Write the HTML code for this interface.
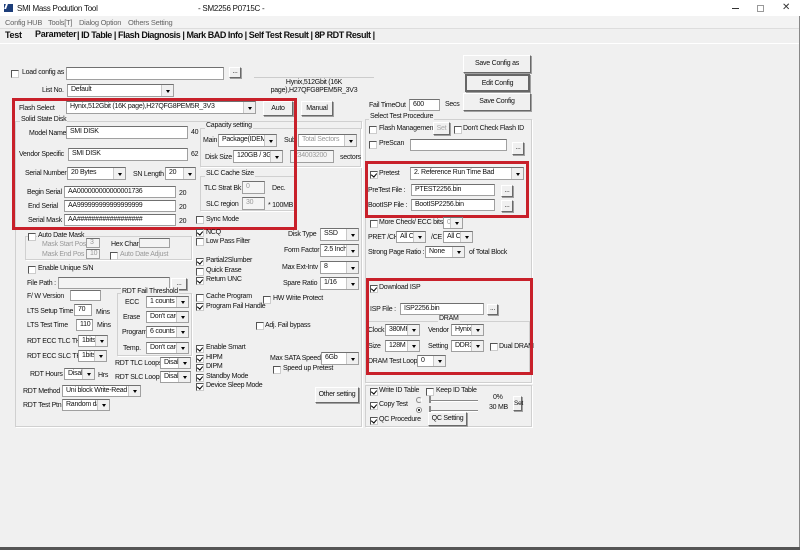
<!DOCTYPE html>
<html><head><meta charset="utf-8"><style>
*{margin:0;padding:0;box-sizing:border-box}
body{width:800px;height:550px;background:#f0f0f0;font-family:"Liberation Sans",sans-serif;font-size:7px;letter-spacing:-0.25px;color:#111;position:relative;overflow:hidden}
.a{position:absolute;white-space:nowrap}
.i{position:absolute;background:#fff;border:1px solid #a0a0a0;border-top-color:#707070;font-size:7px;padding:1px 0 0 3px;overflow:hidden;white-space:nowrap}
.x{background:#f4f4f4;color:#999}
.d{position:absolute;background:#fff;border:1px solid #a0a0a0;border-top-color:#707070;font-size:7px;padding:1px 0 0 3px;overflow:hidden;white-space:nowrap}
.d:after{content:"";position:absolute;right:0;top:0;bottom:0;width:11px;background:#f0f0f0;border-left:1px solid #c8c8c8}
.d:before{content:"";position:absolute;right:3px;top:50%;margin-top:-1px;border:2.5px solid transparent;border-top:3px solid #000;z-index:2}
.c{position:absolute;width:8px;height:8px;background:#fff;border:1px solid #555;border-right-color:#ccc;border-bottom-color:#ccc}
.k:after{content:"";position:absolute;left:1px;top:0px;width:3px;height:4px;border:solid #000;border-width:0 1.5px 1.5px 0;transform:rotate(40deg)}
.b{position:absolute;background:#f0f0f0;border:1px solid #fff;border-right-color:#696969;border-bottom-color:#696969;box-shadow:1px 1px 0 #a0a0a0;text-align:center;font-size:7px;white-space:nowrap}
.g{position:absolute;border:1px solid #d0d0d0;box-shadow:1px 1px 0 #fff}
.gl{position:absolute;background:#f0f0f0;padding:0 1px;white-space:nowrap}
.r{position:absolute;border:3px solid #c8202a}
.gr{color:#999}
</style></head><body>
<!-- title bar -->
<div class="a" style="left:0;top:0;width:800px;height:16px;background:#fff"></div>
<div class="a" style="left:4px;top:4px;width:9px;height:8px;background:#1d3e7a"></div>
<div class="a" style="left:5px;top:4px;width:6px;height:5px;border-left:2px solid #fff;transform:skewX(-20deg)"></div>
<div class="a" style="left:17px;top:4px;font-size:8px">SMI Mass Podution Tool</div>
<div class="a" style="left:198px;top:4px;font-size:8px">- SM2256 P0715C -</div>
<div class="a" style="left:732px;top:8px;width:7px;height:1px;background:#333"></div>
<div class="a" style="left:757px;top:5px;width:7px;height:7px;border:1px solid #999"></div>
<div class="a" style="left:782px;top:2px;font-size:10px;color:#333">✕</div>
<!-- menu -->
<div class="a" style="left:0;top:16px;width:800px;height:12px;background:#f3f3f3"></div>
<div class="a" style="left:5px;top:18px;color:#666;font-size:7.5px">Config HUB</div>
<div class="a" style="left:48px;top:18px;color:#666;font-size:7.5px">Tools[T]</div>
<div class="a" style="left:79px;top:18px;color:#666;font-size:7.5px">Dialog Option</div>
<div class="a" style="left:128px;top:18px;color:#666;font-size:7.5px">Others Setting</div>
<div class="a" style="left:0;top:28px;width:800px;height:1px;background:#ddd"></div>
<!-- tabs -->
<div class="a" style="left:5px;top:30px;font-size:9px;font-weight:bold;letter-spacing:-0.3px">Test</div>
<div class="a" style="left:35px;top:29px;font-size:9px;font-weight:bold;letter-spacing:-0.3px">Parameter</div>
<div class="a" style="left:77px;top:30px;font-size:9px;font-weight:bold;letter-spacing:-0.45px">| ID Table | Flash Diagnosis | Mark BAD Info | Self Test Result | 8P RDT Result |</div>
<div class="a" style="left:0;top:43px;width:800px;height:1px;background:#fff"></div>
<div class="a" style="left:799px;top:16px;width:1px;height:534px;background:#888"></div>
<div class="a" style="left:0;top:547px;width:800px;height:3px;background:#555"></div>

<!-- load config -->
<div class="c" style="left:11px;top:70px"></div>
<div class="a" style="left:22px;top:69px">Load config as</div>
<div class="i" style="left:66px;top:67px;width:158px;height:13px"></div>
<div class="b" style="left:229px;top:67px;width:12px;height:11px;line-height:8px">...</div>
<div class="a" style="left:42px;top:87px">List No.</div>
<div class="d" style="left:67px;top:84px;width:107px;height:13px">Default</div>
<div class="a" style="left:254px;top:77px;width:120px;height:22px;border-top:1px solid #ccc;text-align:center;font-size:7px;line-height:8px;padding-top:1px">Hynix,512Gbit (16K<br>page),H27QFG8PEM5R_3V3</div>
<div class="b" style="left:463px;top:55px;width:68px;height:18px;line-height:16px">Save Config as</div>
<div class="b" style="left:465px;top:74px;width:65px;height:18px;line-height:15px;border:2px solid #666">Edit Config</div>
<div class="b" style="left:463px;top:93px;width:68px;height:18px;line-height:16px">Save Config</div>

<!-- left big group -->
<div class="g" style="left:15px;top:121px;width:347px;height:306px"></div>
<div class="gl" style="left:20px;top:116px">Solid State Disk</div>
<div class="a" style="left:19px;top:105px">Flash Select</div>
<div class="d" style="left:66px;top:101px;width:190px;height:13px">Hynix,512Gbit (16K page),H27QFG8PEM5R_3V3</div>
<div class="b" style="left:263px;top:101px;width:30px;height:15px;line-height:13px">Auto</div>
<div class="b" style="left:301px;top:101px;width:32px;height:15px;line-height:13px">Manual</div>
<div class="a" style="left:29px;top:130px">Model Name</div>
<div class="i" style="left:66px;top:126px;width:122px;height:13px">SMI DISK</div>
<div class="a" style="left:191px;top:129px">40</div>
<div class="a" style="left:19px;top:151px">Vendor Specific</div>
<div class="i" style="left:68px;top:148px;width:120px;height:13px">SMI DISK</div>
<div class="a" style="left:191px;top:151px">62</div>
<div class="a" style="left:25px;top:170px">Serial Number</div>
<div class="d" style="left:67px;top:167px;width:59px;height:13px">20 Bytes</div>
<div class="a" style="left:133px;top:171px">SN Length</div>
<div class="d" style="left:165px;top:167px;width:31px;height:13px">20</div>
<div class="a" style="left:27px;top:189px">Begin Serial</div>
<div class="i" style="left:64px;top:186px;width:112px;height:12px">AA000000000000001736</div>
<div class="a" style="left:179px;top:190px">20</div>
<div class="a" style="left:28px;top:203px">End Serial</div>
<div class="i" style="left:64px;top:200px;width:112px;height:12px">AA999999999999999999</div>
<div class="a" style="left:179px;top:204px">20</div>
<div class="a" style="left:28px;top:217px">Serial Mask</div>
<div class="i" style="left:64px;top:214px;width:112px;height:12px">AA##################</div>
<div class="a" style="left:179px;top:218px">20</div>

<div class="g" style="left:200px;top:128px;width:161px;height:39px"></div>
<div class="gl" style="left:205px;top:122px">Capacity setting</div>
<div class="a" style="left:203px;top:137px">Main</div>
<div class="d" style="left:218px;top:134px;width:59px;height:13px">Package(IDEMA)</div>
<div class="a" style="left:284px;top:137px">Sub</div>
<div class="d x" style="left:298px;top:134px;width:59px;height:13px">Total Sectors</div>
<div class="a" style="left:205px;top:154px">Disk Size</div>
<div class="d" style="left:233px;top:150px;width:50px;height:13px">120GB / 3GB</div>
<div class="i x" style="left:290px;top:150px;width:44px;height:13px">234003200</div>
<div class="a" style="left:340px;top:154px">sectors</div>

<div class="g" style="left:200px;top:176px;width:95px;height:35px"></div>
<div class="gl" style="left:205px;top:170px">SLC Cache Size</div>
<div class="a" style="left:204px;top:185px">TLC Strat Bk</div>
<div class="i x" style="left:242px;top:181px;width:23px;height:13px">0</div>
<div class="a" style="left:272px;top:185px">Dec.</div>
<div class="a" style="left:206px;top:201px">SLC region</div>
<div class="i x" style="left:242px;top:197px;width:23px;height:13px">30</div>
<div class="a" style="left:268px;top:202px">* 100MB</div>
<div class="c" style="left:196px;top:216px"></div><div class="a" style="left:206px;top:216px">Sync Mode</div>
<div class="r" style="left:12px;top:98px;width:285px;height:132px"></div>

<div class="c k" style="left:196px;top:229px"></div><div class="a" style="left:206px;top:229px">NCQ</div>
<div class="c" style="left:196px;top:238px"></div><div class="a" style="left:206px;top:238px">Low Pass Filter</div>

<div class="g" style="left:25px;top:236px;width:167px;height:24px"></div>
<div class="c" style="left:28px;top:233px"></div><div class="gl" style="left:37px;top:232px">Auto Date Mask</div>
<div class="a gr" style="left:42px;top:241px">Mask Start Pos</div>
<div class="i x" style="left:86px;top:238px;width:14px;height:10px;font-size:7px;padding-top:0">3</div>
<div class="a" style="left:111px;top:241px">Hex Char:</div>
<div class="i x" style="left:139px;top:238px;width:31px;height:10px"></div>
<div class="a gr" style="left:42px;top:251px">Mask End Pos</div>
<div class="i x" style="left:86px;top:249px;width:14px;height:10px;font-size:7px;padding-top:0">10</div>
<div class="c" style="left:110px;top:252px"></div><div class="a gr" style="left:120px;top:251px">Auto Date Adjust</div>

<div class="c" style="left:28px;top:266px"></div><div class="a" style="left:38px;top:265px">Enable Unique S/N</div>
<div class="a" style="left:27px;top:280px">File Path :</div>
<div class="i x" style="left:58px;top:277px;width:112px;height:12px"></div>
<div class="b" style="left:171px;top:278px;width:16px;height:12px;line-height:9px">...</div>
<div class="a" style="left:27px;top:293px">F/ W Version</div>
<div class="i" style="left:70px;top:290px;width:31px;height:11px"></div>
<div class="a" style="left:27px;top:308px">LTS Setup Time</div>
<div class="i" style="left:74px;top:304px;width:18px;height:12px">70</div>
<div class="a" style="left:96px;top:309px">Mins</div>
<div class="a" style="left:27px;top:322px">LTS Test Time</div>
<div class="i" style="left:76px;top:319px;width:17px;height:12px">110</div>
<div class="a" style="left:97px;top:322px">Mins</div>
<div class="a" style="left:27px;top:338px">RDT ECC TLC TH</div>
<div class="d" style="left:78px;top:335px;width:30px;height:12px">1bits</div>
<div class="a" style="left:27px;top:353px">RDT ECC SLC TH</div>
<div class="d" style="left:78px;top:350px;width:29px;height:12px">1bits</div>
<div class="a" style="left:30px;top:371px">RDT Hours</div>
<div class="d" style="left:64px;top:368px;width:31px;height:12px">Disable</div>
<div class="a" style="left:98px;top:372px">Hrs</div>

<div class="g" style="left:117px;top:293px;width:75px;height:63px"></div>
<div class="gl" style="left:121px;top:288px">RDT Fail Threshold</div>
<div class="a" style="left:125px;top:299px">ECC</div>
<div class="d" style="left:146px;top:296px;width:43px;height:12px">1 counts</div>
<div class="a" style="left:123px;top:314px">Erase</div>
<div class="d" style="left:146px;top:311px;width:43px;height:12px">Don't care</div>
<div class="a" style="left:122px;top:329px">Program</div>
<div class="d" style="left:146px;top:326px;width:43px;height:12px">6 counts</div>
<div class="a" style="left:123px;top:345px">Temp.</div>
<div class="d" style="left:146px;top:342px;width:43px;height:12px">Don't care</div>
<div class="a" style="left:115px;top:360px">RDT TLC Loops</div>
<div class="d" style="left:160px;top:357px;width:31px;height:12px">Disable</div>
<div class="a" style="left:115px;top:374px">RDT SLC Loops</div>
<div class="d" style="left:160px;top:371px;width:31px;height:12px">Disable</div>
<div class="a" style="left:23px;top:388px">RDT Method</div>
<div class="d" style="left:62px;top:385px;width:79px;height:12px">Uni block Write-Read</div>
<div class="a" style="left:23px;top:402px">RDT Test Ptn.</div>
<div class="d" style="left:62px;top:399px;width:48px;height:12px">Random data</div>

<div class="c k" style="left:196px;top:258px"></div><div class="a" style="left:206px;top:257px">Partial2Slumber</div>
<div class="c" style="left:196px;top:268px"></div><div class="a" style="left:206px;top:267px">Quick Erase</div>
<div class="c k" style="left:196px;top:277px"></div><div class="a" style="left:206px;top:276px">Return UNC</div>
<div class="c" style="left:196px;top:294px"></div><div class="a" style="left:206px;top:293px">Cache Program</div>
<div class="c k" style="left:196px;top:303px"></div><div class="a" style="left:206px;top:303px">Program Fail Handle</div>
<div class="c" style="left:263px;top:296px"></div><div class="a" style="left:273px;top:295px">HW Write Protect</div>
<div class="c" style="left:256px;top:322px"></div><div class="a" style="left:265px;top:322px">Adj. Fail bypass</div>
<div class="c k" style="left:196px;top:345px"></div><div class="a" style="left:206px;top:344px">Enable Smart</div>
<div class="c k" style="left:196px;top:355px"></div><div class="a" style="left:206px;top:354px">HIPM</div>
<div class="c k" style="left:196px;top:364px"></div><div class="a" style="left:206px;top:363px">DIPM</div>
<div class="c k" style="left:196px;top:374px"></div><div class="a" style="left:206px;top:373px">Standby Mode</div>
<div class="c k" style="left:196px;top:383px"></div><div class="a" style="left:206px;top:382px">Device Sleep Mode</div>

<div class="a" style="left:288px;top:231px">Disk Type</div>
<div class="d" style="left:320px;top:228px;width:39px;height:13px">SSD</div>
<div class="a" style="left:284px;top:247px">Form Factor</div>
<div class="d" style="left:320px;top:244px;width:39px;height:13px">2.5 Inch</div>
<div class="a" style="left:282px;top:264px">Max Ext-Intv</div>
<div class="d" style="left:320px;top:261px;width:39px;height:13px">8</div>
<div class="a" style="left:283px;top:280px">Spare Ratio</div>
<div class="d" style="left:320px;top:277px;width:39px;height:13px">1/16</div>
<div class="a" style="left:270px;top:355px">Max SATA Speed</div>
<div class="d" style="left:321px;top:352px;width:38px;height:13px">6Gb</div>
<div class="c" style="left:273px;top:366px"></div><div class="a" style="left:283px;top:365px">Speed up Pretest</div>
<div class="b" style="left:315px;top:387px;width:44px;height:16px;line-height:14px">Other setting</div>

<!-- right -->
<div class="a" style="left:369px;top:102px">Fail TimeOut</div>
<div class="i" style="left:409px;top:99px;width:31px;height:12px">600</div>
<div class="a" style="left:445px;top:101px">Secs</div>
<div class="g" style="left:365px;top:119px;width:167px;height:264px"></div>
<div class="gl" style="left:369px;top:113px">Select Test Procedure</div>
<div class="c" style="left:369px;top:126px"></div><div class="a" style="left:379px;top:125px">Flash Management</div>
<div class="b" style="left:433px;top:122px;width:17px;height:13px;line-height:11px;color:#aaa">Set</div>
<div class="c" style="left:454px;top:126px"></div><div class="a" style="left:463px;top:125px">Don't Check Flash ID</div>
<div class="c" style="left:369px;top:141px"></div><div class="a" style="left:379px;top:140px">PreScan</div>
<div class="i" style="left:410px;top:139px;width:97px;height:12px"></div>
<div class="b" style="left:512px;top:142px;width:12px;height:13px;line-height:10px">...</div>

<div class="c k" style="left:370px;top:171px"></div><div class="a" style="left:379px;top:170px">Pretest</div>
<div class="d" style="left:410px;top:167px;width:114px;height:13px">2. Reference Run Time Bad</div>
<div class="a" style="left:368px;top:187px">PreTest File :</div>
<div class="i" style="left:411px;top:184px;width:84px;height:12px">PTEST2256.bin</div>
<div class="b" style="left:501px;top:185px;width:12px;height:12px;line-height:9px">...</div>
<div class="a" style="left:368px;top:202px">BootISP File :</div>
<div class="i" style="left:411px;top:199px;width:84px;height:12px">BootISP2256.bin</div>
<div class="b" style="left:501px;top:200px;width:12px;height:12px;line-height:9px">...</div>
<div class="r" style="left:365px;top:161px;width:164px;height:57px"></div>

<div class="c" style="left:370px;top:220px"></div><div class="a" style="left:379px;top:219px">More Check</div>
<div class="a" style="left:414px;top:219px">/ ECC bits</div>
<div class="d x" style="left:443px;top:217px;width:20px;height:12px">0</div>
<div class="a" style="left:368px;top:234px">PRET /CH</div>
<div class="d" style="left:396px;top:231px;width:30px;height:12px">All CH</div>
<div class="a" style="left:431px;top:234px">/CE</div>
<div class="d" style="left:443px;top:231px;width:30px;height:12px">All CE</div>
<div class="a" style="left:368px;top:249px">Strong Page Ratio :</div>
<div class="d" style="left:425px;top:246px;width:40px;height:12px">None</div>
<div class="a" style="left:469px;top:249px">of Total Block</div>

<div class="c k" style="left:370px;top:285px"></div><div class="a" style="left:379px;top:284px">Download ISP</div>
<div class="a" style="left:370px;top:306px">ISP File :</div>
<div class="i" style="left:400px;top:303px;width:84px;height:12px">ISP2256.bin</div>
<div class="b" style="left:487px;top:304px;width:11px;height:11px;line-height:8px">...</div>
<div class="g" style="left:367px;top:321px;width:163px;height:52px"></div>
<div class="gl" style="left:438px;top:315px">DRAM</div>
<div class="a" style="left:368px;top:327px">Clock</div>
<div class="d" style="left:385px;top:324px;width:35px;height:12px">380MHZ</div>
<div class="a" style="left:428px;top:327px">Vendor</div>
<div class="d" style="left:451px;top:324px;width:33px;height:12px">Hynix</div>
<div class="a" style="left:368px;top:343px">Size</div>
<div class="d" style="left:385px;top:340px;width:35px;height:12px">128M</div>
<div class="a" style="left:428px;top:343px">Setting</div>
<div class="d" style="left:451px;top:340px;width:33px;height:12px">DDR3</div>
<div class="c" style="left:490px;top:343px"></div><div class="a" style="left:499px;top:343px">Dual DRAM</div>
<div class="a" style="left:368px;top:358px">DRAM Test Loop</div>
<div class="d" style="left:417px;top:355px;width:29px;height:12px">0</div>
<div class="r" style="left:366px;top:278px;width:167px;height:97px"></div>

<div class="g" style="left:365px;top:385px;width:167px;height:42px"></div>
<div class="c k" style="left:370px;top:388px"></div><div class="a" style="left:379px;top:387px">Write ID Table</div>
<div class="c" style="left:426px;top:388px"></div><div class="a" style="left:436px;top:387px">Keep ID Table</div>
<div class="c k" style="left:370px;top:402px"></div><div class="a" style="left:379px;top:401px">Copy Test</div>
<div class="a" style="left:416px;top:397px;width:6px;height:6px;border-radius:50%;border:1px solid #888;border-right-color:#fff"></div>
<div class="a" style="left:416px;top:407px;width:6px;height:6px;border-radius:50%;border:1px solid #888;background:radial-gradient(#000 30%,#fff 40%)"></div>
<div class="a" style="left:430px;top:400px;width:48px;height:2px;border-top:1px solid #888;border-bottom:1px solid #fff"></div>
<div class="a" style="left:430px;top:410px;width:48px;height:2px;border-top:1px solid #888;border-bottom:1px solid #fff"></div>
<div class="a" style="left:429px;top:396px;width:2px;height:7px;border:1px solid #888;border-top:0"></div>
<div class="a" style="left:429px;top:406px;width:2px;height:7px;border:1px solid #888;border-top:0"></div>
<div class="a" style="left:493px;top:394px">0%</div>
<div class="a" style="left:489px;top:404px">30 MB</div>
<div class="b" style="left:513px;top:396px;width:9px;height:15px;line-height:13px;font-size:6.5px">Set</div>
<div class="c k" style="left:370px;top:417px"></div><div class="a" style="left:379px;top:416px">QC Procedure</div>
<div class="b" style="left:428px;top:412px;width:39px;height:14px;line-height:12px">QC Setting</div>
</body></html>
